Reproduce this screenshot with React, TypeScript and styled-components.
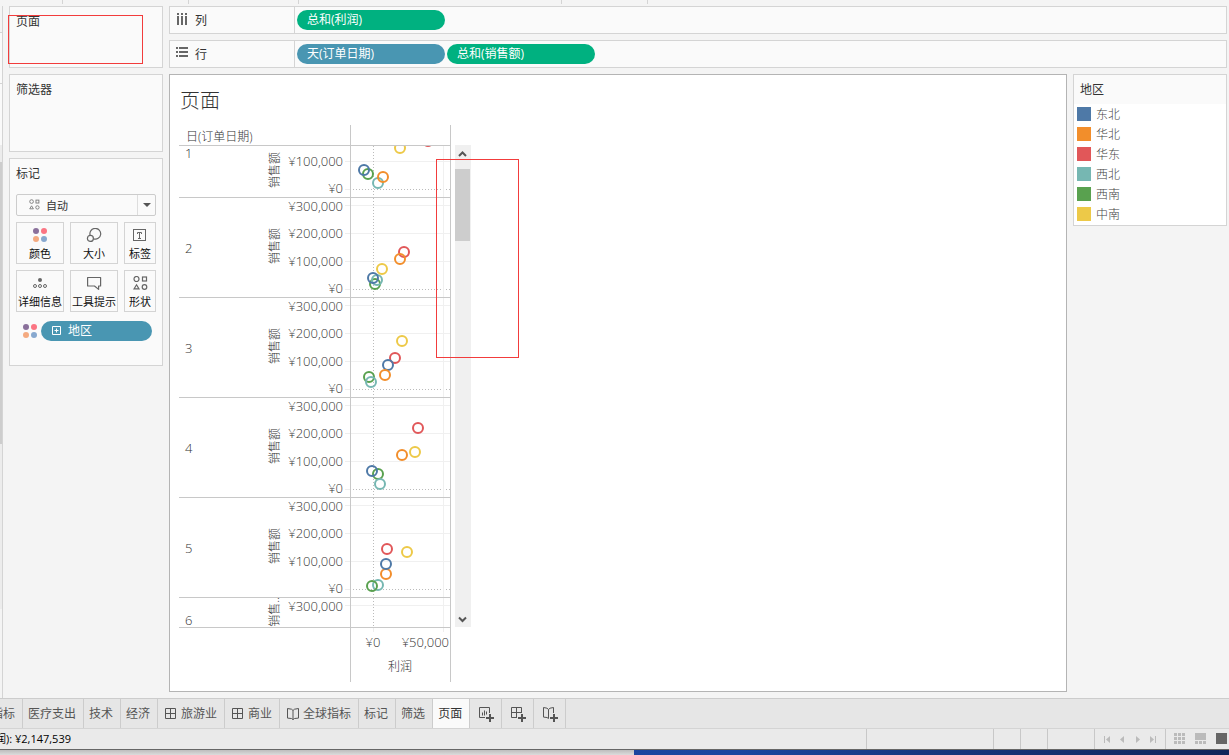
import React from 'react';
import styled, { createGlobalStyle } from 'styled-components';

const UI_FONT = '"Open Sans", "Noto Sans CJK SC", sans-serif';

const GlobalStyle = createGlobalStyle`
  * { box-sizing: border-box; }
  body {
    margin: 0;
    background: #f4f4f4;
    color: #333;
    font: 12px/16px ${UI_FONT};
  }
  button, select { font: inherit; color: inherit; }
`;

/* ---------- page frame ---------- */

const Page = styled.div`
  position: relative;
  display: flex;
  flex-direction: column;
  min-height: 100vh;
  overflow: hidden;
`;

const ToolbarEdge = styled.div`
  display: flex;
  height: 4px;
  margin-bottom: 2px;
`;

const ToolbarSlot = styled.div<{ $width: number }>`
  width: ${(p) => p.$width}px;
  border-right: 1px solid #d4d4d4;
`;

const Workspace = styled.div`
  display: flex;
  flex: 1;
  padding: 0 2px 6px 0;
`;

const DataPaneEdge = styled.div`
  width: 3px;
  margin: 0 6px -6px 0;
  border-right: 1px solid #d4d4d4;
`;

const EdgePart = styled.div<{ $height: number; $bg: string; $line?: boolean }>`
  height: ${(p) => p.$height}px;
  background: ${(p) => p.$bg};
  border-bottom: ${(p) => (p.$line ? '1px solid #d4d4d4' : '0')};
`;

const SideColumn = styled.div`
  display: flex;
  flex-direction: column;
  gap: 6px;
  width: 154px;
  margin-right: 6px;
`;

const Card = styled.section<{ $height: number }>`
  height: ${(p) => p.$height}px;
  padding: 7px 6px 6px;
  background: #fafafa;
  border: 1px solid #d4d4d4;
`;

const CardTitle = styled.h2`
  margin: 0;
  font-size: 12px;
  line-height: 16px;
  font-weight: 400;
`;

const MainColumn = styled.main`
  display: flex;
  flex: 1;
  flex-direction: column;
  gap: 6px;
  min-width: 0;
`;

/* ---------- shelves ---------- */

const Shelf = styled.div`
  display: flex;
  height: 28px;
  background: #fafafa;
  border: 1px solid #d4d4d4;
`;

const ShelfLabel = styled.div`
  display: flex;
  gap: 7px;
  width: 125px;
  padding: 6px 0 0 6px;
  border-right: 1px solid #d4d4d4;
`;

const ShelfBody = styled.div`
  display: flex;
  align-items: center;
  gap: 2px;
  padding-left: 2px;
`;

const Pill = styled.button<{ $kind: 'measure' | 'dimension'; $width: number }>`
  display: flex;
  align-items: center;
  gap: 6px;
  width: ${(p) => p.$width}px;
  height: 20px;
  padding: 0 10px;
  border: 0;
  border-radius: 10px;
  color: #fff;
  background: ${(p) => (p.$kind === 'measure' ? '#00b180' : '#4996b2')};
`;

/* ---------- marks card ---------- */

const MarkType = styled.label`
  position: relative;
  display: block;
  height: 22px;
  margin: 12px 0 6px;
`;

const MarkSelect = styled.select`
  appearance: none;
  width: 100%;
  height: 22px;
  padding: 1px 20px 0 29px;
  border: 1px solid #ccc;
  border-radius: 2px;
  background: #fafafa;
  font-size: 11px;
`;

const MarkTypeIcon = styled.svg`
  position: absolute;
  left: 13px;
  top: 5px;
`;

const MarkArrow = styled.span`
  position: absolute;
  right: 1px;
  top: 1px;
  display: grid;
  place-items: center;
  width: 18px;
  height: 20px;
  border-left: 1px solid #ddd;
  pointer-events: none;
`;

const MarkGrid = styled.div`
  display: grid;
  grid-template-columns: 48px 48px 32px;
  gap: 6px;
`;

const MarkButton = styled.button`
  display: flex;
  flex-direction: column;
  align-items: center;
  gap: 4px;
  height: 42px;
  padding: 5px 0 0;
  border: 1px solid #d4d4d4;
  background: #fafafa;
  color: #111;
  font-size: 11px;
  white-space: nowrap;
`;

const MarkPillRow = styled.div`
  display: flex;
  align-items: center;
  gap: 4px;
  margin: 9px 0 0 7px;
`;

/* ---------- view ---------- */

const ViewRow = styled.div`
  display: flex;
  flex: 1;
  align-items: stretch;
  gap: 6px;
`;

const View = styled.section`
  flex: 1;
  min-width: 0;
  padding: 12px 9px 9px;
  background: #fff;
  border: 1px solid #b4b4b4;
`;

const ViewTitle = styled.h1`
  margin: 0 0 10px 1px;
  font-size: 20px;
  line-height: 28px;
  font-weight: 300;
  color: #333;
`;

const ChartArea = styled.div`
  display: flex;
  gap: 4px;
`;

const Chart = styled.div`
  width: 272px;
  color: #555;
`;

const ChartRow = styled.div<{ $height: number; $last?: boolean }>`
  display: flex;
  height: ${(p) => p.$height}px;
  border-bottom: ${(p) => (p.$last ? '0' : '1px solid #c8c8c8')};
`;

const FieldName = styled.div`
  width: 171px;
  padding: 4px 0 0 7px;
  color: #333;
  font-weight: 300;
`;

const DayCell = styled.div<{ $align: string }>`
  display: flex;
  align-items: ${(p) => p.$align};
  width: 80px;
  padding-left: 6px;
  font-size: 13px;
  line-height: 14px;
  font-weight: 300;
  color: #333;
`;

const Plot = styled.div`
  display: flex;
  width: 101px;
  border: solid #c8c8c8;
  border-width: 0 1px;
`;

const AxisSvg = styled.svg`
  overflow: visible;
`;

const AxisText = styled.text`
  font: 300 13px ${UI_FONT};
  fill: #333;
`;

const AxisTitle = styled.text`
  font: 300 12px ${UI_FONT};
  fill: #333;
`;

const ScrollBar = styled.div`
  display: flex;
  flex-direction: column;
  width: 16px;
  height: 482px;
  margin-top: 20px;
  background: #f0f0f0;
`;

const ScrollButton = styled.button`
  display: grid;
  place-items: center;
  height: 17px;
  padding: 1px 1px 0 0;
  border: 0;
  background: none;
`;

const ScrollTrack = styled.div`
  flex: 1;
  padding: 7px 1px 0 0;
`;

const ScrollThumb = styled.div`
  height: 72px;
  background: #cdcdcd;
`;

/* ---------- legend ---------- */

const Legend = styled.aside`
  align-self: flex-start;
  width: 154px;
  background: #fff;
  border: 1px solid #d4d4d4;
`;

const LegendHead = styled.div`
  padding: 7px 6px 6px;
  background: #fafafa;
`;

const LegendList = styled.ul`
  margin: 0;
  padding: 0 3px 1px;
  list-style: none;
`;

const LegendItem = styled.li`
  display: flex;
  gap: 5px;
  height: 20px;
  padding-top: 3px;
  color: #444;
  font-weight: 300;
`;

const Swatch = styled.span<{ $color: string }>`
  width: 14px;
  height: 14px;
  background: ${(p) => p.$color};
`;

/* ---------- sheet tabs and status bar ---------- */

const TabBar = styled.nav`
  display: flex;
  height: 30px;
  background: #e6e6e6;
  border-top: 1px solid #ccc;
`;

const Tab = styled.button<{ $active?: boolean; $cut?: boolean }>`
  display: flex;
  align-items: center;
  justify-content: ${(p) => (p.$cut ? 'flex-end' : 'center')};
  gap: 4px;
  width: ${(p) => (p.$cut ? '23px' : 'auto')};
  overflow: hidden;
  padding: 0 7px 0 5px;
  border: 0;
  border-right: 1px solid #ccc;
  background: ${(p) => (p.$active ? '#fafafa' : 'transparent')};
  color: ${(p) => (p.$active ? '#333' : '#555')};
  white-space: nowrap;

  svg { margin-left: 2px; }
`;

const NewSheetButton = styled(Tab)`
  width: 32px;
`;

const StatusBar = styled.footer`
  display: flex;
  height: 22px;
  background: #eaeaea;
  border-top: 1px solid #d4d4d4;
  border-bottom: 1px solid #666;
`;

const StatusText = styled.div`
  display: flex;
  justify-content: flex-end;
  align-items: center;
  width: 71px;
  overflow: hidden;
  margin-right: auto;
  font-size: 11px;
  color: #000;
  white-space: nowrap;
`;

const StatusCell = styled.div<{ $width: number }>`
  display: flex;
  align-items: center;
  justify-content: space-evenly;
  width: ${(p) => p.$width}px;
  border-left: 1px solid #c8c8c8;
`;

const SheetViews = styled(StatusCell)`
  justify-content: flex-end;
  gap: 10px;
  padding: 0 2px 2px 0;
`;

const IconButton = styled.button`
  display: flex;
  padding: 0;
  border: 0;
  background: none;
`;

const DesktopEdge = styled.div`
  display: flex;
  height: 5px;
  background: linear-gradient(90deg, #1d4196, #1a46a0 60%, #17377f 75%, #10245a);
`;

const DesktopWindow = styled.div`
  width: 634px;
  background: linear-gradient(#bdbdbd, #dcdcdc);
`;

const Highlight = styled.div<{ $x: number; $y: number; $w: number; $h: number }>`
  position: absolute;
  left: ${(p) => p.$x}px;
  top: ${(p) => p.$y}px;
  width: ${(p) => p.$w}px;
  height: ${(p) => p.$h}px;
  border: 1px solid #f23c3c;
  pointer-events: none;
`;

/* ---------- icons ---------- */

const ColumnsIcon = () => (
  <svg width="12" height="12" fill="#666">
    {[0, 4, 8].map((x) => (
      <g key={x}>
        <rect x={x + 1} y="0" width="2" height="2" />
        <rect x={x + 1} y="3" width="2" height="9" />
      </g>
    ))}
  </svg>
);

const RowsIcon = () => (
  <svg width="12" height="12" fill="#666">
    {[0, 4, 8].map((y) => (
      <g key={y}>
        <rect x="0" y={y} width="2" height="2" />
        <rect x="3" y={y} width="9" height="2" />
      </g>
    ))}
  </svg>
);

const ColorDots = () => (
  <svg width="14" height="14">
    <circle cx="3" cy="3" r="3" fill="#8a709b" />
    <circle cx="11" cy="3" r="3" fill="#fb7583" />
    <circle cx="3" cy="11" r="3" fill="#f4aa80" />
    <circle cx="11" cy="11" r="3" fill="#87a8cf" />
  </svg>
);

const ShapeGlyphs = ({ color }: { color: string }) => (
  <g fill="none" stroke={color} strokeWidth="1.2">
    <circle cx="3.5" cy="3" r="2.5" />
    <rect x="9.5" y="1" width="4" height="4" />
    <path d="M3.5 8.8 6 12.9H1z" />
    <circle cx="11.5" cy="11" r="2.3" />
  </g>
);

const SizeIcon = () => (
  <svg width="16" height="14" fill="none" stroke="#666" strokeWidth="1.2">
    <path d="M4.1 7.2A5.4 5.4 0 1 1 7.6 10.9" />
    <circle cx="4.4" cy="10.4" r="3" />
  </svg>
);

const LabelIcon = () => (
  <svg width="14" height="14" fill="none" stroke="#666">
    <rect x="0.5" y="1.5" width="12" height="11" />
    <path d="M4.5 6V4.5h4V6M6.5 4.5v6M5 10.5h3" />
  </svg>
);

const DetailIcon = () => (
  <svg width="14" height="14" fill="none" stroke="#666">
    <circle cx="7" cy="4" r="2" fill="#666" stroke="none" />
    <circle cx="2" cy="10" r="1.5" />
    <circle cx="7" cy="10" r="1.5" />
    <circle cx="12" cy="10" r="1.5" />
  </svg>
);

const TooltipIcon = () => (
  <svg width="15" height="14" fill="none" stroke="#666" strokeWidth="1.2">
    <path d="M.6 1.500h13v8.500h-2v3.400L7.500 10H.6z" strokeLinejoin="round" />
  </svg>
);

const DashboardIcon = () => (
  <svg width="12" height="12" fill="none" stroke="#555">
    <path d="M.5.5h10v10H.5zM5.5.5v10M.5 5.5h10" />
  </svg>
);

const StoryIcon = () => (
  <svg width="12" height="12" fill="none" stroke="#555">
    <path d="M6 2.5 4.5 1.2.5.5v9.6l4 .4L6 11.6l1.5-1.1 4-.4V.5l-4 .7zM6 2.5v9" />
  </svg>
);

const NewSheetIcon = ({ kind }: { kind: 'sheet' | 'dashboard' | 'story' }) => (
  <svg width="16" height="16" fill="none" stroke="#555">
    {kind === 'sheet' && <path d="M7 11.5H1.5V1.5h10V7M4.5 6.5v3M6.5 4.5v5M8.5 5.5v3" />}
    {kind === 'dashboard' && <path d="M7 11.5H1.5v-10h10V7M6.5 1.5v10M1.5 6.5h10" />}
    {kind === 'story' && (
      <path d="M6.5 3.5 5 2.2l-3.500-.7v9.600l3.500.4 1.500 1M6.5 3.5 8 2.2l3.500-.7V7M6.500 3.500v9" />
    )}
    <path d="M12 8v8M8 12h8" strokeWidth="2" />
  </svg>
);

const Chevron = ({ up }: { up?: boolean }) => (
  <svg width="9" height="7" fill="none" stroke="#555" strokeWidth="2">
    <path d={up ? 'M1 5 4.5 1.5 8 5' : 'M1 1.5 4.5 5 8 1.5'} />
  </svg>
);

const FieldIcon = () => (
  <svg width="11" height="10" fill="none" stroke="#fff">
    <path d="M1.5.5h8v8h-8zM5.5 2.5v4M3.5 4.5h4" />
  </svg>
);

/* ---------- data ---------- */

const COLORS = {
  东北: '#4e79a7',
  华北: '#f28e2b',
  华东: '#e15759',
  西北: '#76b7b2',
  西南: '#59a14f',
  中南: '#edc948',
};

type Region = keyof typeof COLORS;
type Mark = [Region, number, number];

interface Pane {
  day: number;
  height: number;
  from: number;
  align: string;
  title: string;
  titleY: number;
  marks: Mark[];
}

const FULL = { height: 99, from: 0, align: 'center', title: '销售额', titleY: 48 };

const PANES: Pane[] = [
  {
    day: 1, height: 51, from: 48, align: 'flex-start', title: '销售额', titleY: 72,
    marks: [['中南', 49, 50], ['华东', 77, 43], ['西南', 17, 76], ['东北', 13, 72], ['西北', 27, 85], ['华北', 32, 79]],
  },
  {
    ...FULL, day: 2,
    marks: [['华东', 53, 54], ['华北', 49, 61], ['中南', 31, 71], ['西南', 24, 86], ['西北', 26, 82], ['东北', 22, 80]],
  },
  {
    ...FULL, day: 3,
    marks: [['中南', 51, 43], ['华东', 44, 60], ['东北', 37, 67], ['华北', 34, 77], ['西南', 18, 79], ['西北', 20, 84]],
  },
  {
    ...FULL, day: 4,
    marks: [['华东', 67, 30], ['华北', 51, 57], ['中南', 64, 54], ['西南', 27, 76], ['东北', 21, 73], ['西北', 29, 86]],
  },
  {
    ...FULL, day: 5,
    marks: [['华东', 36, 51], ['中南', 56, 54], ['华北', 35, 76], ['东北', 35, 66], ['西北', 27, 87], ['西南', 21, 88]],
  },
  { day: 6, height: 29, from: 0, align: 'flex-end', title: '销售..', titleY: 14, marks: [] },
];

/* label, grid line position, label baseline */
const TICKS: [string, number, number][] = [
  ['¥300,000', 7, 13],
  ['¥200,000', 35, 40],
  ['¥100,000', 63, 68],
  ['¥0', 91, 95],
];

const PaneRow = ({ pane }: { pane: Pane }) => {
  const end = pane.from + pane.height;
  const ticks = TICKS.filter(([, y]) => y > pane.from && y < end);
  return (
    <ChartRow $height={pane.height + 1}>
      <DayCell $align={pane.align}>{pane.day}</DayCell>
      <AxisSvg width="91" height={pane.height} viewBox={`0 ${pane.from} 91 ${pane.height}`}>
        <AxisTitle textAnchor="middle" transform={`translate(20 ${pane.titleY}) rotate(-90)`}>
          {pane.title}
        </AxisTitle>
        {ticks.map(([label, y, baseline]) => (
          <g key={label}>
            <AxisText x="84" y={baseline} textAnchor="end">{label}</AxisText>
            <path d={`M86 ${y + 0.5}h5`} stroke="#eee" />
          </g>
        ))}
      </AxisSvg>
      <Plot>
        <svg width="99" height={pane.height} viewBox={`0 ${pane.from} 99 ${pane.height}`} fill="none">
          {ticks.map(([label, y]) => (
            <path
              key={label}
              d={label === '¥0' ? `M2 ${y + 0.5}h97` : `M0 ${y + 0.5}h99`}
              stroke={label === '¥0' ? '#bbb' : '#f0f0f0'}
              strokeDasharray={label === '¥0' ? '1 2' : undefined}
            />
          ))}
          <path d="M92.5 0v99" stroke="#f0f0f0" />
          <path d="M22.5 0v99" stroke="#bbb" strokeDasharray="1 2" />
          {pane.marks.map(([region, x, y]) => (
            <circle key={region} cx={x} cy={y} r="5" stroke={COLORS[region]} strokeWidth="2" />
          ))}
        </svg>
      </Plot>
    </ChartRow>
  );
};

const MARK_BUTTONS: [string, React.ReactNode][] = [
  ['颜色', <ColorDots />],
  ['大小', <SizeIcon />],
  ['标签', <LabelIcon />],
  ['详细信息', <DetailIcon />],
  ['工具提示', <TooltipIcon />],
  ['形状', <svg width="15" height="14"><ShapeGlyphs color="#666" /></svg>],
];

const TABS: [string, React.ReactNode?][] = [
  ['医疗支出'],
  ['技术'],
  ['经济'],
  ['旅游业', <DashboardIcon />],
  ['商业', <DashboardIcon />],
  ['全球指标', <StoryIcon />],
  ['标记'],
  ['筛选'],
  ['页面'],
];

const NAV: [string, string][] = [
  ['第一个', 'M0 0h1v7H0zM6 0v7L2 3.5z'],
  ['上一个', 'M5 0v7L1 3.5z'],
  ['下一个', 'M1 0v7l4-3.5z'],
  ['最后一个', 'M0 0v7l4-3.5zM5 0h1v7H5z'],
];

export default function App() {
  return (
    <Page>
      <GlobalStyle />
      <ToolbarEdge>
        {[63, 126, 110, 263, 86].map((w) => <ToolbarSlot key={w} $width={w} />)}
      </ToolbarEdge>

      <Workspace>
        <DataPaneEdge>
          <EdgePart $height={27} $bg="#f4f4f4" $line />
          <EdgePart $height={51} $bg="#fafafa" $line />
          <EdgePart $height={61} $bg="#fafafa" />
          <EdgePart $height={17} $bg="#ececec" />
          <EdgePart $height={282} $bg="#cdcdcd" />
          <EdgePart $height={165} $bg="#ececec" />
        </DataPaneEdge>

        <SideColumn>
          <Card $height={62}><CardTitle>页面</CardTitle></Card>
          <Card $height={78}><CardTitle>筛选器</CardTitle></Card>
          <Card $height={208}>
            <CardTitle>标记</CardTitle>
            <MarkType>
              <MarkSelect aria-label="标记类型" defaultValue="auto">
                <option value="auto">自动</option>
              </MarkSelect>
              <MarkTypeIcon width="11" height="11" viewBox="0 0 15 14">
                <ShapeGlyphs color="#777" />
              </MarkTypeIcon>
              <MarkArrow>
                <svg width="8" height="4"><path d="M0 0h8L4 4z" fill="#555" /></svg>
              </MarkArrow>
            </MarkType>
            <MarkGrid>
              {MARK_BUTTONS.map(([label, icon]) => (
                <MarkButton key={label}>{icon}<span>{label}</span></MarkButton>
              ))}
            </MarkGrid>
            <MarkPillRow>
              <ColorDots />
              <Pill $kind="dimension" $width={111}><FieldIcon />地区</Pill>
            </MarkPillRow>
          </Card>
        </SideColumn>

        <MainColumn>
          <Shelf>
            <ShelfLabel><ColumnsIcon />列</ShelfLabel>
            <ShelfBody><Pill $kind="measure" $width={148}>总和(利润)</Pill></ShelfBody>
          </Shelf>
          <Shelf>
            <ShelfLabel><RowsIcon />行</ShelfLabel>
            <ShelfBody>
              <Pill $kind="dimension" $width={148}>天(订单日期)</Pill>
              <Pill $kind="measure" $width={148}>总和(销售额)</Pill>
            </ShelfBody>
          </Shelf>

          <ViewRow>
            <View>
              <ViewTitle>页面</ViewTitle>
              <ChartArea>
                <Chart>
                  <ChartRow $height={21}>
                    <FieldName>日(订单日期)</FieldName>
                    <Plot />
                  </ChartRow>
                  {PANES.map((pane) => <PaneRow key={pane.day} pane={pane} />)}
                  <ChartRow $height={54} $last>
                    <FieldName />
                    <Plot>
                      <svg width="99" height="54">
                        <path d="M22.5 0v4M92.5 0v4" stroke="#eee" />
                        <AxisText x="22" y="19" textAnchor="middle">¥0</AxisText>
                        <AxisText x="98" y="19" textAnchor="end">¥50,000</AxisText>
                        <AxisTitle x="49" y="43" textAnchor="middle">利润</AxisTitle>
                      </svg>
                    </Plot>
                  </ChartRow>
                </Chart>
                <ScrollBar>
                  <ScrollButton aria-label="向上滚动"><Chevron up /></ScrollButton>
                  <ScrollTrack><ScrollThumb /></ScrollTrack>
                  <ScrollButton aria-label="向下滚动"><Chevron /></ScrollButton>
                </ScrollBar>
              </ChartArea>
            </View>

            <Legend>
              <LegendHead><CardTitle>地区</CardTitle></LegendHead>
              <LegendList>
                {(Object.keys(COLORS) as Region[]).map((name) => (
                  <LegendItem key={name}><Swatch $color={COLORS[name]} />{name}</LegendItem>
                ))}
              </LegendList>
            </Legend>
          </ViewRow>
        </MainColumn>
      </Workspace>

      <TabBar>
        <Tab $cut>指标</Tab>
        {TABS.map(([label, icon]) => (
          <Tab key={label} $active={label === '页面'}>{icon}{label}</Tab>
        ))}
        <NewSheetButton aria-label="新建工作表"><NewSheetIcon kind="sheet" /></NewSheetButton>
        <NewSheetButton aria-label="新建仪表板"><NewSheetIcon kind="dashboard" /></NewSheetButton>
        <NewSheetButton aria-label="新建故事"><NewSheetIcon kind="story" /></NewSheetButton>
      </TabBar>

      <StatusBar>
        <StatusText>润): ¥2,147,539</StatusText>
        <StatusCell $width={127} />
        <StatusCell $width={27} />
        <StatusCell $width={27} />
        <StatusCell $width={47} />
        <StatusCell $width={71}>
          {NAV.map(([name, d]) => (
            <IconButton key={name} aria-label={name}>
              <svg width="6" height="7"><path d={d} fill="#bbb" /></svg>
            </IconButton>
          ))}
        </StatusCell>
        <SheetViews $width={64}>
          <IconButton aria-label="网格视图">
            <svg width="11" height="11" fill="#bbb">
              {[0, 4, 8].map((y) => [0, 4, 8].map((x) => (
                <rect key={`${x}-${y}`} x={x} y={y} width="3" height="3" />
              )))}
            </svg>
          </IconButton>
          <IconButton aria-label="缩略图视图">
            <svg width="11" height="11" fill="#bbb">
              <rect width="11" height="7" />
              {[0, 4, 8].map((x) => <rect key={x} x={x} y="8" width="3" height="3" />)}
            </svg>
          </IconButton>
          <IconButton aria-label="单页视图">
            <svg width="11" height="11"><rect width="11" height="11" fill="#666" /></svg>
          </IconButton>
        </SheetViews>
      </StatusBar>
      <DesktopEdge><DesktopWindow /></DesktopEdge>

      <Highlight $x={8} $y={15} $w={135} $h={49} />
      <Highlight $x={436} $y={159} $w={83} $h={199} />
    </Page>
  );
}
